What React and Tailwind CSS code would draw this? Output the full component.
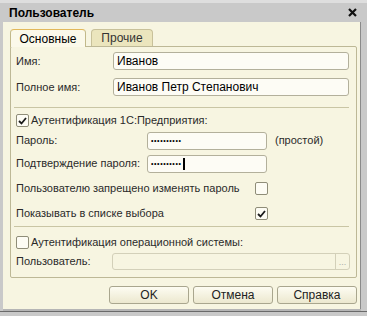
import React from 'react';

const font = { fontFamily: '"Liberation Sans", Arial, sans-serif' };

const Check = ({ checked }) => (
  <div className="w-[13px] h-[13px] border border-[#8f8d78] rounded-[2px] bg-[#fdfcf4] flex items-center justify-center shrink-0">
    {checked && (
      <svg width="9" height="8" viewBox="0 0 9 8">
        <path d="M1 4 L3.5 6.5 L8 1" fill="none" stroke="#1a1a1a" strokeWidth="1.8" />
      </svg>
    )}
  </div>
);

const Field = ({ children, className = '' }) => (
  <div className={`h-[18px] border border-[#b3b09b] rounded-[3px] bg-[#fdfcf5] flex items-center px-[3px] text-black ${className}`}>
    {children}
  </div>
);

const Dots = ({ cursor }) => (
  <div className="flex items-center">
    <span className="text-[7px] tracking-[0.6px] leading-none text-black">••••••••••</span>
    {cursor && <span className="w-[2px] h-[12px] bg-black ml-[1px]"></span>}
  </div>
);

const Sep = ({ className = '' }) => (
  <div className={`h-px bg-[#c9c5a4] mx-[3px] mr-[7px] ${className}`}></div>
);

const Button = ({ children, className = '' }) => (
  <div className={`h-[18px] w-[80px] border border-[#a9a68e] rounded-[3px] bg-gradient-to-b from-[#fdfcf2] to-[#ece8cf] flex items-center justify-center text-[12px] text-[#222] ${className}`}>
    {children}
  </div>
);

export default function App() {
  return (
    <div className="w-[367px] h-[316px] bg-[#c9c9c9] flex flex-col text-[11px] text-[#2a2a2a]" style={font}>
      {/* title */}
      <div className="h-[22px] shrink-0 flex items-center justify-between pl-[9px] pr-[10px] border-t-[3px] border-[#dedede]">
        <span className="text-[12px] font-bold text-black">Пользователь</span>
        <svg width="9" height="9" viewBox="0 0 9 9">
          <path d="M1 1 L8 8 M8 1 L1 8" stroke="#111" strokeWidth="2.2" />
        </svg>
      </div>

      {/* body */}
      <div className="ml-[3px] mr-[6px] h-[287px] shrink-0 bg-[#f7f5e1] border-r border-[#8a8a8a] flex flex-col">
        {/* tabs */}
        <div className="mt-[6px] pl-[7px] flex items-end gap-[5px] h-[18px]">
          <div className="w-[76px] h-[18px] border border-b-0 border-[#c2b98a] border-t-[#e2b85a] rounded-t-[4px] bg-[#fbf9ea] flex items-center justify-center text-[12px] text-black relative top-px">
            Основные
          </div>
          <div className="w-[62px] h-[17px] border border-b-0 border-[#c8c19a] rounded-t-[4px] bg-[#ebe5bd] flex items-center justify-center text-[12px] text-[#333]">
            Прочие
          </div>
        </div>

        {/* panel */}
        <div className="ml-[7px] mr-[3px] h-[232px] border border-[#bdb896] rounded-[2px] pt-[5px] flex flex-col">
          <div className="flex items-center h-[18px] pl-[5px] pr-[7px]">
            <span className="w-[97px]">Имя:</span>
            <Field className="flex-1 text-[12px]">Иванов</Field>
          </div>
          <div className="flex items-center h-[18px] pl-[5px] pr-[7px] mt-[8px]">
            <span className="w-[97px]">Полное имя:</span>
            <Field className="flex-1 text-[12px]">Иванов Петр Степанович</Field>
          </div>

          <Sep className="mt-[11px]" />

          <div className="flex items-center h-[13px] pl-[5px] mt-[6px] gap-[2px]">
            <Check checked />
            <span>Аутентификация 1С:Предприятия:</span>
          </div>
          <div className="flex items-center h-[17px] pl-[5px] mt-[5px]">
            <span className="w-[131px]">Пароль:</span>
            <Field className="w-[120px] h-[17px]"><Dots /></Field>
            <span className="ml-[8px]">(простой)</span>
          </div>
          <div className="flex items-center h-[17px] pl-[5px] mt-[6px]">
            <span className="w-[131px]">Подтверждение пароля:</span>
            <Field className="w-[120px] h-[17px]"><Dots cursor /></Field>
          </div>
          <div className="flex items-center h-[13px] pl-[5px] mt-[10px]">
            <span className="w-[239px]">Пользователю запрещено изменять пароль</span>
            <Check />
          </div>
          <div className="flex items-center h-[13px] pl-[5px] mt-[12px]">
            <span className="w-[239px]">Показывать в списке выбора</span>
            <Check checked />
          </div>

          <Sep className="mt-[6px]" />

          <div className="flex items-center h-[13px] pl-[5px] mt-[9px] gap-[2px]">
            <Check />
            <span>Аутентификация операционной системы:</span>
          </div>
          <div className="flex items-center h-[17px] pl-[5px] pr-[6px] mt-[4px]">
            <span className="w-[96px]">Пользователь:</span>
            <div className="flex-1 h-[17px] border border-[#d3d0b9] rounded-[3px] flex items-center justify-end">
              <div className="w-[14px] h-[15px] border-l border-[#d3d0b9] flex items-end justify-center pb-[2px] text-[9px] leading-none text-[#aaa]">...</div>
            </div>
          </div>
        </div>

        {/* buttons */}
        <div className="flex justify-end gap-[4px] mt-[8px] pr-[3px]">
          <Button>OK</Button>
          <Button>Отмена</Button>
          <Button>Справка</Button>
        </div>
      </div>

      <div className="ml-[3px] mr-[6px] h-[2px] bg-[#b5b5b5]"></div>
      <div className="h-px bg-[#6a6a6a]"></div>
    </div>
  );
}
